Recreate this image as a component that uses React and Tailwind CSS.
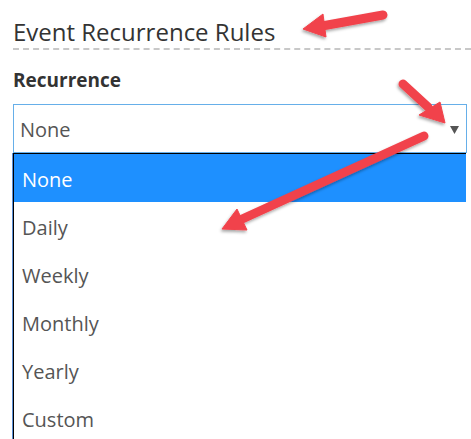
import React from 'react';

const options = ['None', 'Daily', 'Weekly', 'Monthly', 'Yearly', 'Custom'];

function Arrows() {
  return (
    <svg className="absolute inset-0 pointer-events-none" width="471" height="439" viewBox="0 0 471 439">
      <defs>
        <filter id="shadow" x="-20%" y="-20%" width="140%" height="140%">
          <feDropShadow dx="-1" dy="2" stdDeviation="1.5" floodColor="#000" floodOpacity="0.35" />
        </filter>
      </defs>
      <g fill="#f1434b" stroke="#f1434b" filter="url(#shadow)">
        {/* title arrow */}
        <line x1="383" y1="15" x2="322" y2="26" strokeWidth="9" strokeLinecap="round" />
        <polygon points="303,29 323,14 326,37" strokeWidth="1" strokeLinejoin="round" />
        {/* caret arrow */}
        <line x1="403" y1="84" x2="428" y2="107" strokeWidth="9" strokeLinecap="round" />
        <polygon points="445,123 419,115 440,102" strokeWidth="1" strokeLinejoin="round" />
        {/* list arrow */}
        <line x1="424" y1="136" x2="240" y2="220" strokeWidth="9" strokeLinecap="round" />
        <polygon points="222,229 237,209 247,230" strokeWidth="1" strokeLinejoin="round" />
      </g>
    </svg>
  );
}

export default function App() {
  return (
    <div
      className="relative w-[471px] h-[439px] overflow-hidden bg-white"
      style={{ fontFamily: '"Open Sans", "Noto Sans", sans-serif' }}
    >
      <div className="pl-[13px]">
        <h2 className="pt-[18px] pb-[2px] text-[24px] leading-[28px] font-normal text-[#333] border-b-2 border-dashed border-[#c8c8c8]">
          Event Recurrence Rules
        </h2>
      </div>

      <div className="px-[13px] pr-[4px]">
        <label className="block mt-[18px] text-[19px] leading-[24px] font-bold text-[#333]">Recurrence</label>

        <div className="mt-[12px] h-[49px] border border-[#66afe9] flex items-center justify-between pl-[6px] pr-[7px] pt-[2px]">
          <span className="text-[20px] leading-[24px] text-[#555]">None</span>
          <svg width="9" height="8" viewBox="0 0 9 8">
            <polygon points="0,0 9,0 4.5,8" fill="#555" />
          </svg>
        </div>

        <div className="w-[453px] border-t border-l border-black shadow-[-1px_0_0_#5b8fd6]">
          {options.map((opt, i) => (
            <div
              key={opt}
              className={
                i === 0
                  ? 'h-[48px] flex items-center pl-[8px] pt-[3px] text-[20px] bg-[#1e90ff] text-white'
                  : 'h-[48px] flex items-center pl-[8px] pt-[3px] text-[20px] bg-white text-[#555]'
              }
            >
              {opt}
            </div>
          ))}
        </div>
      </div>

      <Arrows />
    </div>
  );
}
